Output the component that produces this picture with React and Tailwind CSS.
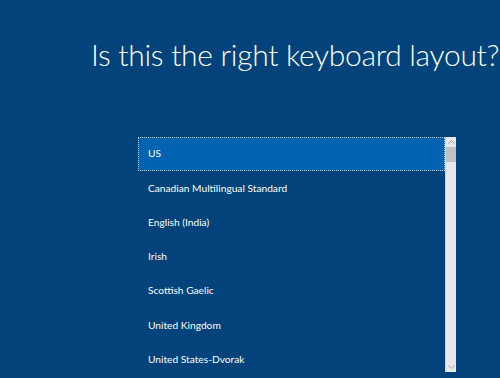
import React from 'react';

const layouts = [
  'US',
  'Canadian Multilingual Standard',
  'English (India)',
  'Irish',
  'Scottish Gaelic',
  'United Kingdom',
  'United States-Dvorak',
];

export default function App() {
  return (
    <div className="w-[500px] h-[378px] overflow-hidden bg-[#01437a] font-['Lato',sans-serif] text-white">
      <h1 className="pl-[91px] pt-[34px] text-[30px] font-light leading-[40px] whitespace-nowrap tracking-[-0.3px]">
        Is this the right keyboard layout?
      </h1>

      <div className="ml-[138px] mt-[63px] flex w-[318px]">
        <ul className="flex-1 h-[241px] overflow-hidden text-[10.2px]">
          {layouts.map((name, i) => (
            <li
              key={name}
              className={
                i === 0
                  ? 'h-[34px] flex items-center pl-[10px] bg-[#0063b1] outline-1 outline-dotted outline-offset-[-1px] outline-[#b9cde0]'
                  : 'h-[34.3px] flex items-center pl-[10px]'
              }
            >
              {name}
            </li>
          ))}
        </ul>

        <div className="w-[11px] h-[235px] bg-[#e8e8e8] flex flex-col border-l border-[#d4d4d4]">
          <div className="h-[10px] flex items-center justify-center text-[#a0a0a0]">
            <svg width="7" height="4" viewBox="0 0 7 4"><path d="M0.5 3.5 L3.5 0.5 L6.5 3.5" fill="none" stroke="currentColor" strokeWidth="1" /></svg>
          </div>
          <div className="h-[15px] bg-[#c1c1c1]" />
          <div className="flex-1" />
          <div className="h-[10px] flex items-center justify-center text-[#a0a0a0]">
            <svg width="7" height="4" viewBox="0 0 7 4"><path d="M0.5 0.5 L3.5 3.5 L6.5 0.5" fill="none" stroke="currentColor" strokeWidth="1" /></svg>
          </div>
        </div>
      </div>
    </div>
  );
}
